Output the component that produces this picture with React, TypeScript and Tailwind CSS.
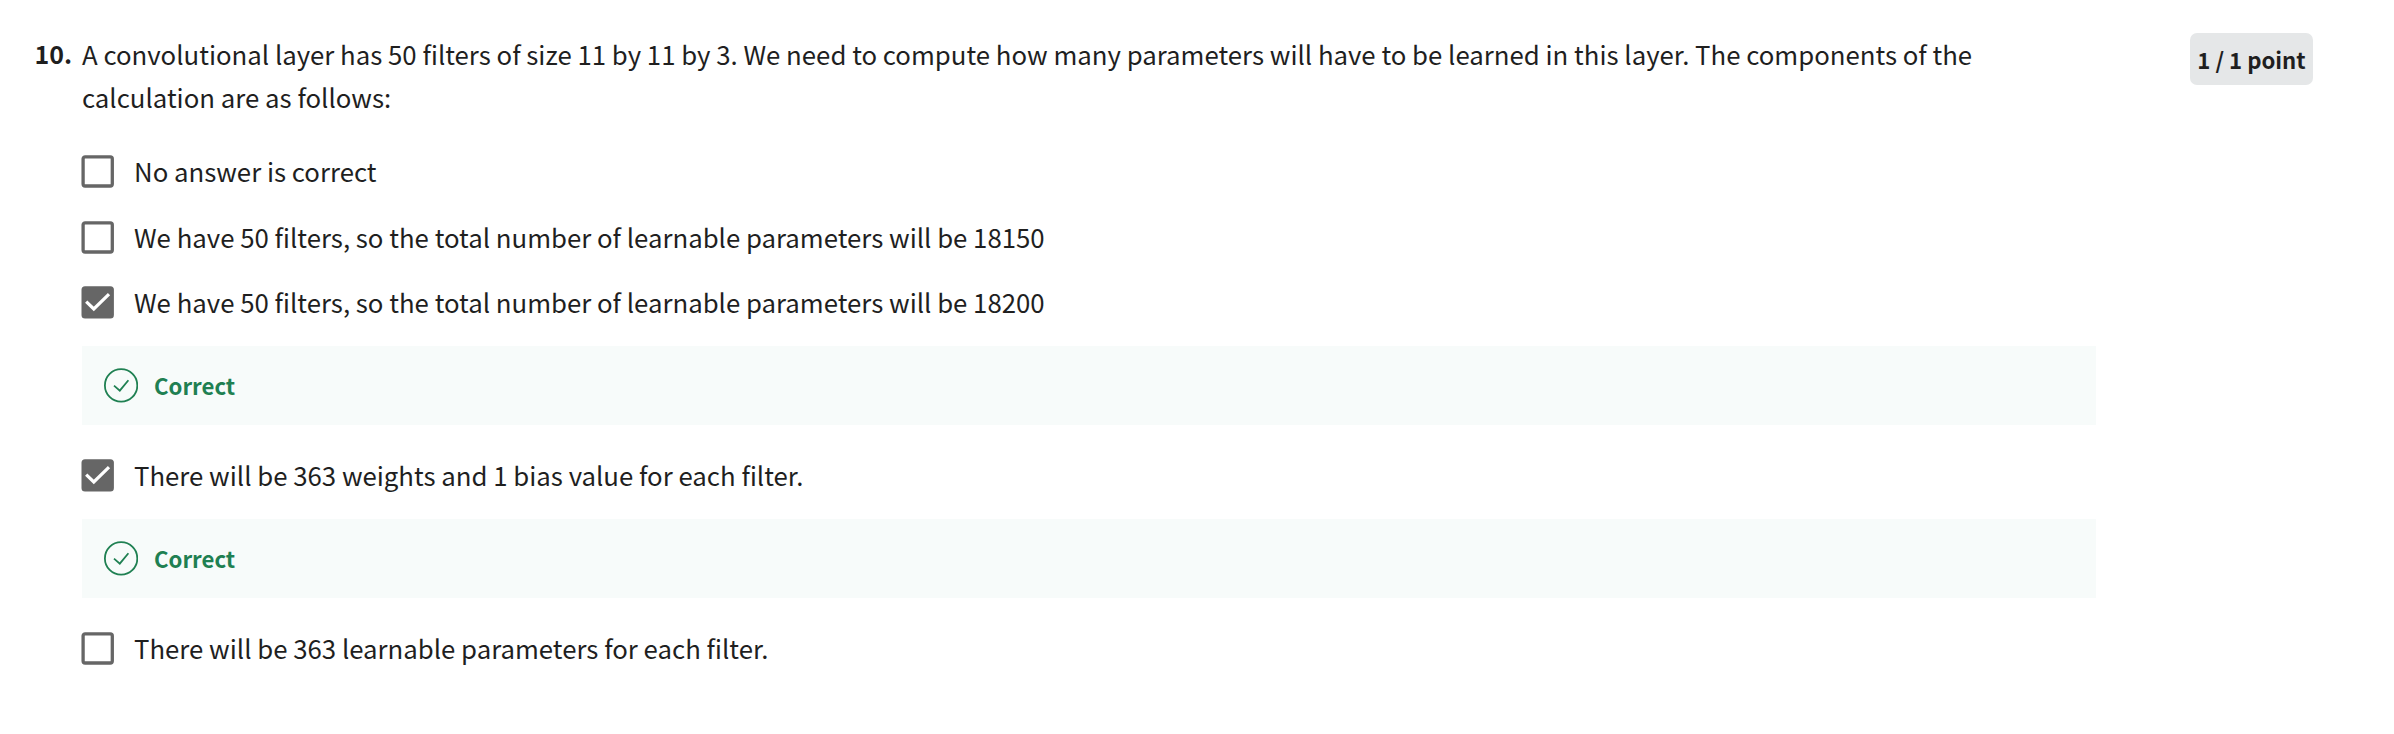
const font = "font-['Noto_Sans_CJK_SC',sans-serif]";

function Box({ on }: { on?: boolean }) {
  return (
    <svg className="-ml-px block h-[33px] w-[34px] shrink-0" viewBox="0 0 34 33">
      {on ? (
        <>
          <rect x="0.5" y="0.2" width="32.4" height="32.4" rx="3.5" fill="#666666" />
          <path d="M5.2 15.6l7.6 7.4L28 8.2" fill="none" stroke="#fff" strokeWidth="3.2" />
        </>
      ) : (
        <rect x="2.1" y="1.8" width="29.2" height="29.2" rx="2" fill="none" stroke="#666666" strokeWidth="3.3" />
      )}
    </svg>
  );
}

function Option({ text, on, className }: { text: string; on?: boolean; className: string }) {
  return (
    <div className={`flex h-[33px] items-start ${className}`}>
      <Box on={on} />
      <span className="-mt-px ml-[19px] leading-[33px] whitespace-nowrap">{text}</span>
    </div>
  );
}

function Correct({ className }: { className: string }) {
  return (
    <div className={`flex h-[79px] w-[2014px] items-center bg-[#f7fbfa] pl-[22px] text-[#1f8052] ${className}`}>
      <svg className="h-[35px] w-[34px]" viewBox="0 0 34 35" fill="none" stroke="currentColor" strokeWidth="1.8">
        <circle cx="17.1" cy="17.4" r="16.2" />
        <path d="M10 17.6l5.8 5L24.4 12.2" />
      </svg>
      <span className="ml-[16px] text-[22.2px] font-bold">Correct</span>
    </div>
  );
}

export default function App() {
  return (
    <div className={`flex h-[734px] w-[2394px] overflow-hidden bg-white text-[25.78px] text-[#1f1f1f] ${font}`}>
      <div className="w-[82px] shrink-0 pl-[34.5px] pt-8 text-[25px] leading-[43px] font-bold">10.</div>
      <div className="w-[2014px] shrink-0 pt-8">
        <p className="leading-[43px] whitespace-nowrap">
          A convolutional layer has 50 filters of size 11 by 11 by 3. We need to compute how many parameters will have to be learned in this layer. The components of the<br />calculation are as follows:
        </p>
        <Option text="No answer is correct" className="mt-[37px]" />
        <Option text="We have 50 filters, so the total number of learnable parameters will be 18150" className="mt-[33px]" />
        <Option on text="We have 50 filters, so the total number of learnable parameters will be 18200" className="mt-[32px]" />
        <Correct className="mt-[27px]" />
        <Option on text="There will be 363 weights and 1 bias value for each filter." className="mt-[34px]" />
        <Correct className="mt-[27px]" />
        <Option text="There will be 363 learnable parameters for each filter." className="mt-[34px]" />
      </div>
      <div className="ml-[94px] mt-[33px] flex h-[52px] w-[123px] shrink-0 items-center justify-center rounded-[7px] bg-[#e5e7e8] pt-0.5 text-[22.2px] font-bold whitespace-nowrap">1 / 1 point</div>
    </div>
  );
}
